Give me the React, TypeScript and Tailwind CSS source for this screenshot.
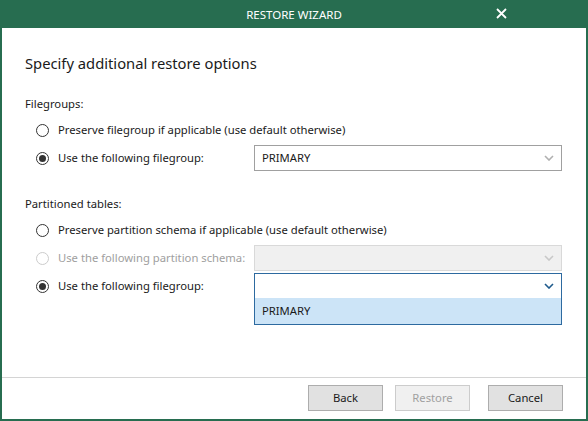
import React from "react";

const font = { fontFamily: '"Segoe UI", "Noto Sans", "Open Sans", sans-serif' };

function Radio({ checked, disabled }: { checked?: boolean; disabled?: boolean }) {
  return (
    <div
      className={`w-[13px] h-[13px] rounded-full border flex items-center justify-center bg-white ${
        disabled ? "border-[#cccccc]" : "border-[#333333]"
      }`}
    >
      {checked && <div className="w-[7px] h-[7px] rounded-full bg-[#333333]" />}
    </div>
  );
}

function Chevron({ color }: { color: string }) {
  return (
    <svg width="10" height="6" viewBox="0 0 10 6">
      <path d="M1 1 L5 5 L9 1" fill="none" stroke={color} strokeWidth="1.6" />
    </svg>
  );
}

function RadioRow({ label, checked, disabled, children }: { label: string; checked?: boolean; disabled?: boolean; children?: React.ReactNode }) {
  return (
    <div className="flex items-center h-[28px]">
      <div className="w-[22px] shrink-0 flex">
        <Radio checked={checked} disabled={disabled} />
      </div>
      <div className={`w-[196px] shrink-0 whitespace-nowrap ${disabled ? "text-[#a0a0a0]" : "text-[#1a1a1a]"}`}>{label}</div>
      {children}
    </div>
  );
}

export default function App() {
  return (
    <div className="w-[588px] h-[421px] bg-[#276d50] flex flex-col text-[11.25px]" style={font}>
      <div className="h-[28px] flex items-center relative">
        <div className="flex-1 text-center text-white text-[11.5px] pt-[1px]">RESTORE WIZARD</div>
        <div className="absolute right-[81px] top-[8px]">
          <svg width="11" height="11" viewBox="0 0 11 11">
            <path d="M1 1 L10 10 M10 1 L1 10" stroke="white" strokeWidth="1.8" />
          </svg>
        </div>
      </div>
      <div className="flex-1 mx-[2px] mb-[2px] bg-white flex flex-col">
        <div className="flex-1 flex flex-col pl-[23px] pr-[24px]">
          <div className="text-[14.75px] text-[#1a1a1a] mt-[24px] h-[22px] leading-[22px]">Specify additional restore options</div>
          <div className="mt-[22px] text-[#1a1a1a] h-[16px] leading-[16px]">Filegroups:</div>
          <div className="pl-[11px] mt-[4px] flex flex-col">
            <RadioRow label="Preserve filegroup if applicable (use default otherwise)" />
            <RadioRow label="Use the following filegroup:" checked>
              <div className="flex-1 h-[26px] border border-[#a0a0a0] flex items-center justify-between pl-[7px] pr-[7px] text-[#1a1a1a]">
                <span>PRIMARY</span>
                <Chevron color="#b0b0b0" />
              </div>
            </RadioRow>
          </div>
          <div className="mt-[24px] text-[#1a1a1a] h-[16px] leading-[16px]">Partitioned tables:</div>
          <div className="pl-[11px] mt-[4px] flex flex-col">
            <RadioRow label="Preserve partition schema if applicable (use default otherwise)" />
            <RadioRow label="Use the following partition schema:" disabled>
              <div className="flex-1 h-[26px] border border-[#d9d9d9] bg-[#f0f0f0] flex items-center justify-end pr-[7px]">
                <Chevron color="#c8c8c8" />
              </div>
            </RadioRow>
            <div className="relative">
              <RadioRow label="Use the following filegroup:" checked>
                <div className="flex-1 h-[26px] border border-[#2d6aa0] bg-white flex items-center justify-end pr-[7px]">
                  <Chevron color="#1e5a8c" />
                </div>
              </RadioRow>
              <div className="absolute left-[218px] right-0 top-[26px] h-[27px] border border-[#2d6aa0] border-t-0 bg-[#cce4f7] flex items-center pl-[7px] text-[#1a1a1a]">
                PRIMARY
              </div>
            </div>
          </div>
        </div>
        <div className="h-[1px] bg-[#d4d4d4]" />
        <div className="h-[41px] flex items-center justify-end pr-[23px] pb-[1px]">
          <div className="w-[75px] h-[26px] border border-[#adadad] bg-[#e1e1e1] flex items-center justify-center text-[#1a1a1a]">Back</div>
          <div className="w-[75px] h-[26px] ml-[12px] border border-[#cccccc] bg-[#f0f0f0] flex items-center justify-center text-[#a0a0a0]">Restore</div>
          <div className="w-[75px] h-[26px] ml-[18px] border border-[#adadad] bg-[#e1e1e1] flex items-center justify-center text-[#1a1a1a]">Cancel</div>
        </div>
      </div>
    </div>
  );
}
